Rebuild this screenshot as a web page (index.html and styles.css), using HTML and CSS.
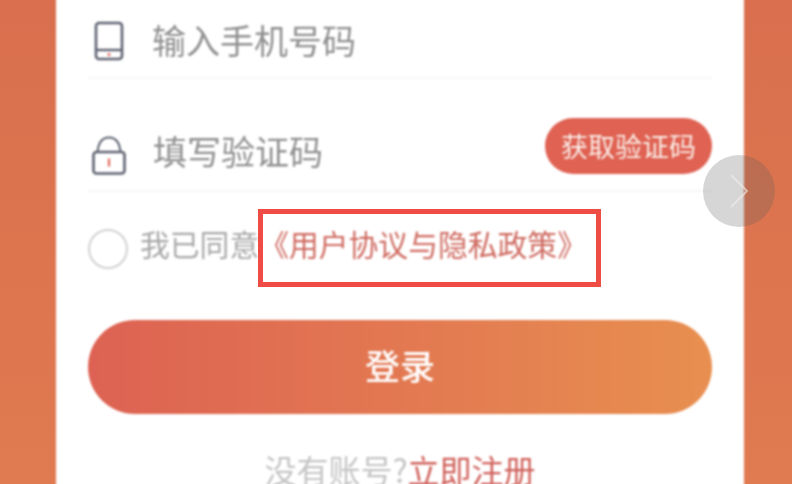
FILE: index.html
```html
<!DOCTYPE html>
<html lang="zh-CN">
<head>
<meta charset="utf-8">
<title>登录</title>
<link rel="stylesheet" href="styles.css">
</head>
<body>
<main class="card">
  <div class="field field-phone">
    <svg class="icon" width="30" height="40" viewBox="0 0 30 40" fill="none">
      <rect x="2" y="2" width="26" height="36" rx="3" stroke="#5f6372" stroke-width="2.6"/>
      <path d="M2 29h26" stroke="#5f6372" stroke-width="2.4"/>
      <circle cx="15" cy="33.6" r="1.5" fill="#e0685a"/>
    </svg>
    <span class="placeholder">输入手机号码</span>
  </div>
  <div class="field field-code">
    <svg class="icon" width="34" height="40" viewBox="0 0 34 40" fill="none">
      <rect x="1.5" y="16" width="31" height="21.5" rx="3" stroke="#5f6372" stroke-width="2.6"/>
      <path d="M5.500 16C6.500 6 11 1.500 17 1.500S27.500 6 28.500 16" stroke="#5f6372" stroke-width="2"/>
      <path d="M17 22.500v8" stroke="#e0685a" stroke-width="2.200"/>
    </svg>
    <span class="placeholder">填写验证码</span>
    <span class="send">获取验证码</span>
  </div>
  <div class="agree">
    <span class="radio"></span>
    <span class="agree-text">我已同意<a class="agree-link">《用户协议与隐私政策》</a></span>
  </div>
  <div class="login">登录</div>
  <p class="signup">没有账号?<a class="signup-link">立即注册</a></p>
</main>
<div class="highlight"></div>
<div class="next">
  <svg width="20" height="36" viewBox="0 0 20 36" fill="none"><path d="M2 2l16 16L2 34" stroke="#f1ece9" stroke-opacity=".6" stroke-width="2"/></svg>
</div>
</body>
</html>
```
FILE: styles.css
```css
* { box-sizing: border-box; }
html, body { margin: 0; height: 484px; overflow: hidden; }
body {
  position: relative;
  background: linear-gradient(180deg, #d96f4e 0%, #e07a50 100%);
  font-family: "Noto Sans CJK SC", "Liberation Sans", sans-serif;
}
.card {
  width: 688px;
  height: 524px;
  margin: -20px 0 0 56px;
  padding: 20px 32px 0;
  background: #fff;
  filter: blur(0.8px);
  overflow: hidden;
}
.field {
  display: flex;
  border-bottom: 2px solid #f7f7f7;
}
.field-phone { height: 79px; padding: 0 0 0 6px; align-items: center; }
.field-code { height: 113px; padding: 39px 0 0 4px; align-items: flex-start; }
.icon { flex: none; }
.field-phone .icon { margin-top: 4px; }
.field-phone .placeholder { margin: 3px 0 0 28px; }
.field-code .icon { margin-top: 18px; }
.field-code .placeholder { margin: 13px 0 0 27px; }
.placeholder {
  font-size: 34px;
  line-height: 40px;
  color: #8f8f8f;
}
.send {
  margin-left: auto;
  width: 167px;
  height: 56px;
  border-radius: 28px;
  background: #df6253;
  color: #fbeee8;
  font-size: 27px;
  line-height: 56px;
  text-align: center;
}
.agree {
  display: flex;
  align-items: center;
  gap: 12px;
  margin-top: 36px;
  height: 42px;
}
.radio {
  flex: none;
  width: 40px;
  height: 40px;
  border-radius: 50%;
  border: 2px solid #d2d2d2;
}
.agree-text {
  font-size: 29.8px;
  line-height: 42px;
  color: #a8a8a8;
  white-space: nowrap;
  margin-top: -12px;
}
.agree-link { color: #cf6a60; }
.login {
  margin-top: 50px;
  height: 94px;
  border-radius: 47px;
  background: linear-gradient(90deg, #dd6253 0%, #e88f50 100%);
  color: #fff;
  font-size: 35px;
  font-weight: 500;
  line-height: 90px;
  text-align: center;
}
.signup {
  margin: 33px 0 0;
  font-size: 32px;
  line-height: 44px;
  text-align: center;
  color: #c4c4c4;
  white-space: nowrap;
}
.signup-link { color: #d0605a; }
.highlight {
  position: absolute;
  left: 258px;
  top: 209px;
  width: 343px;
  height: 78px;
  border: 5px solid #ee4c45;
}
.next {
  position: absolute;
  left: 703px;
  top: 155px;
  width: 72px;
  height: 72px;
  border-radius: 50%;
  background: rgba(90, 90, 90, .25);
  display: flex;
  align-items: center;
  justify-content: center;
}
```
